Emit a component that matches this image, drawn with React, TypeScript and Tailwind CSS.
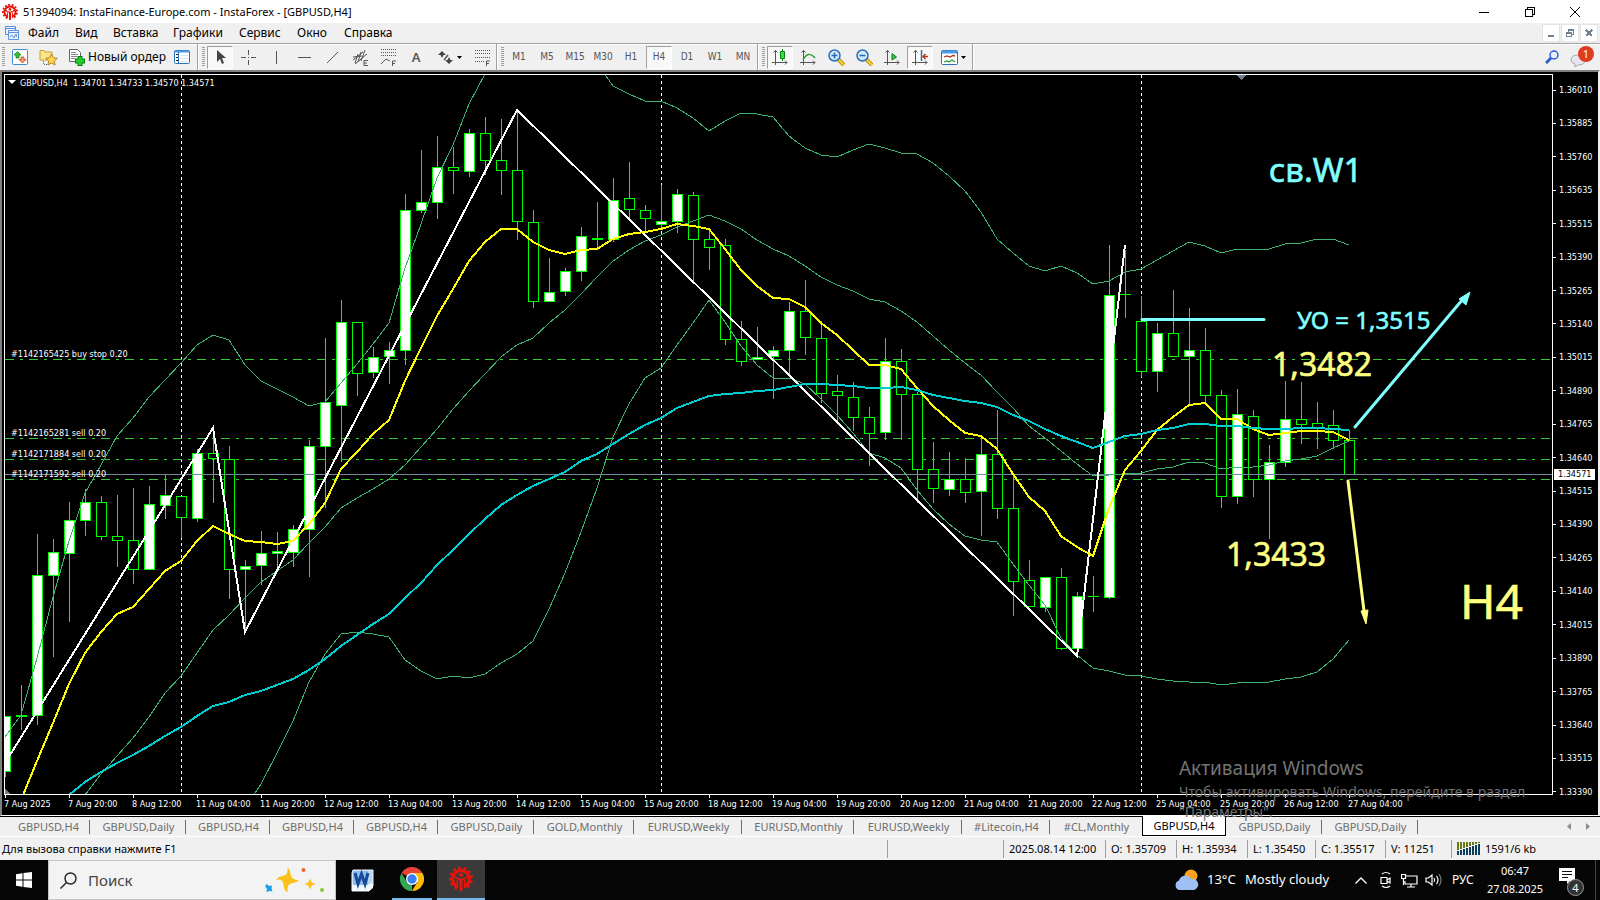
import React from "react";
import clsx from "clsx";

const STEP = 16;
const UNIT = 720 / 1568;

const barX = (i: number) => i * STEP;
const rowY = (v: number) => Math.round(5 + v * UNIT);

// high, body top, body bottom, low, bullish
const CANDLES: number[][] = [
  [1384, 1386, 1504, 1518, 1], [1318, 1382, 1386, 1416, 1], [989, 1079, 1382, 1404, 1], [1000, 1027, 1079, 1257, 1],
  [919, 959, 1029, 1180, 1], [891, 920, 959, 994, 1], [906, 920, 994, 1002, 0], [904, 994, 1001, 1061, 0],
  [889, 1001, 1066, 1098, 0], [884, 924, 1066, 1066, 1], [858, 903, 925, 956, 1], [907, 907, 951, 998, 0],
  [804, 813, 953, 963, 1], [757, 813, 824, 921, 0], [797, 826, 1066, 1130, 0], [1045, 1059, 1066, 1200, 1],
  [982, 1031, 1057, 1099, 1], [984, 1025, 1031, 1060, 1], [969, 977, 1027, 1061, 1], [784, 798, 977, 1082, 1],
  [562, 702, 798, 932, 1], [479, 528, 707, 831, 1], [526, 526, 637, 688, 0], [581, 604, 635, 648, 1],
  [571, 589, 602, 662, 1], [248, 284, 589, 621, 1], [152, 265, 283, 290, 1], [122, 190, 265, 303, 1],
  [145, 190, 195, 248, 0], [107, 116, 199, 211, 1], [81, 116, 175, 207, 0], [85, 175, 197, 250, 0],
  [66, 197, 308, 348, 0], [283, 310, 482, 497, 0], [388, 461, 482, 482, 1], [409, 417, 459, 470, 1],
  [320, 339, 417, 438, 1], [266, 343, 347, 366, 0], [213, 262, 347, 353, 1], [179, 258, 282, 300, 0],
  [272, 284, 300, 330, 0], [229, 308, 313, 326, 1], [237, 249, 308, 333, 1], [244, 251, 347, 437, 0],
  [328, 347, 363, 414, 0], [346, 360, 565, 577, 0], [525, 565, 613, 623, 0], [538, 603, 607, 610, 1],
  [579, 587, 602, 695, 1], [484, 502, 587, 640, 1], [436, 502, 559, 599, 0], [525, 561, 681, 703, 0],
  [642, 678, 687, 745, 0], [658, 691, 733, 765, 0], [712, 733, 768, 841, 0], [562, 613, 766, 783, 1],
  [586, 613, 683, 783, 0], [680, 683, 848, 921, 0], [788, 848, 888, 921, 0], [810, 870, 890, 906, 1],
  [823, 870, 898, 922, 0], [780, 815, 896, 994, 1], [719, 815, 931, 956, 0], [860, 931, 1090, 1167, 0],
  [1045, 1088, 1145, 1145, 0], [1083, 1083, 1147, 1159, 1], [1063, 1083, 1236, 1241, 0], [1115, 1123, 1238, 1255, 1],
  [1080, 1123, 1123, 1159, 0], [359, 469, 1125, 1130, 1], [370, 466, 466, 518, 0], [470, 524, 633, 646, 0],
  [529, 550, 633, 679, 1], [457, 550, 600, 604, 0], [497, 589, 600, 706, 1], [540, 589, 687, 701, 0],
  [675, 687, 907, 932, 0], [673, 728, 905, 923, 1], [719, 731, 870, 908, 0], [795, 831, 870, 1000, 1],
  [656, 739, 831, 843, 1], [658, 739, 750, 793, 0], [701, 748, 757, 804, 0], [719, 752, 785, 803, 0],
  [762, 785, 859, 861, 0],
];

const FAST_MA = [
  1638, 1567, 1483, 1400, 1316, 1247, 1203, 1164, 1147, 1108, 1070, 1048, 1005, 972, 989, 1003, 1007, 1010, 1005, 966,
  921, 848, 810, 772, 740, 656, 583, 514, 455, 394, 353, 324, 324, 352, 371, 379, 371, 367, 346, 336, 330, 325, 314,
  319, 325, 368, 414, 448, 474, 478, 494, 529, 556, 588, 620, 620, 630, 670, 709, 740, 768, 776, 803, 857, 909, 939,
  994, 1018, 1037, 933, 849, 808, 763, 733, 707, 703, 738, 738, 761, 773, 768, 765, 764, 767, 784,
];
const SLOW_MA = [
  1557, 1528, 1508, 1488, 1471, 1450, 1428, 1409, 1386, 1364, 1354, 1340, 1330, 1317, 1304, 1284, 1262, 1232, 1208,
  1184, 1162, 1128, 1095, 1056, 1024, 988, 957, 926, 903, 884, 870, 853, 830, 814, 793, 772, 752, 735, 715, 702, 689,
  683, 681, 678, 675, 668, 662, 662, 665, 667, 670, 671, 668, 676, 685, 692, 700, 704, 713, 730, 743, 759, 776, 789,
  802, 789, 776, 772, 763, 757, 749, 749, 753, 753, 757, 761, 760, 757, 758, 761, 762,
];
const UPPER_LEFT = [
  1430, 1382, 1258, 1125, 1005, 900, 838, 775, 737, 690, 653, 617, 578, 555, 566, 620, 655, 673, 690, 710, 702, 660,
  618, 575, 530, 410, 313, 214, 142, 53, -12,
];
const UPPER_RIGHT = [
  -36, 12, 31, 46, 46, 61, 82, 110, 90, 71, 73, 81, 121, 149, 163, 167, 153, 140, 147, 159, 162, 181, 210, 242, 287,
  347, 376, 406, 415, 404, 421, 444, 438, 419, 412, 391, 373, 353, 362, 377, 369, 369, 367, 358, 354, 346, 346, 360,
];
const MIDDLE = [
  1557, 1512, 1473, 1434, 1387, 1335, 1297, 1248, 1198, 1165, 1127, 1094, 1070, 1045, 1008, 974, 933, 911, 890, 870,
  839, 800, 760, 716, 678, 641, 604, 577, 561, 530, 500, 465, 429, 395, 370, 350, 338, 320, 306, 295, 308, 325, 349,
  368, 384, 404, 428, 447, 460, 476, 484, 502, 527, 558, 589, 617, 643, 679, 714, 753, 780, 809, 837, 863, 861, 857,
  855, 848, 842, 832, 835, 848, 842, 842, 838, 829, 826, 818, 802, 787,
];
const LOWER = [
  1585, 1533, 1465, 1396, 1310, 1249, 1206, 1203, 1206, 1212, 1264, 1287, 1304, 1297, 1302, 1294, 1269, 1249, 1221,
  1152, 1073, 985, 888, 778, 705, 650, 628, 578, 529, 480, 528, 580, 620, 650, 650, 661, 695, 730, 768, 812, 824, 846,
  893, 935, 967, 993, 1001, 1007, 1053, 1100, 1143, 1216, 1253, 1281, 1286, 1296, 1297, 1304, 1309, 1312, 1310, 1317,
  1313, 1312, 1310, 1304, 1300, 1290, 1260, 1220,
];
const ZIGZAG = [[0, 1488], [13, 757], [15, 1202], [32, 65], [67, 1254], [70, 359]];

const ORDERS = [
  { y: 609, label: "#1142165425 buy stop 0.20" },
  { y: 781, label: "#1142165281 sell 0.20" },
  { y: 827, label: "#1142171884 sell 0.20" },
  { y: 872, label: "#1142171592 sell 0.20" },
];

const PRICES = [
  "1.36010", "1.35885", "1.35760", "1.35635", "1.35515", "1.35390", "1.35265", "1.35140", "1.35015", "1.34890",
  "1.34765", "1.34640", "1.34515", "1.34390", "1.34265", "1.34140", "1.34015", "1.33890", "1.33765", "1.33640",
  "1.33515", "1.33390",
];

const TIMES = [
  "7 Aug 2025", "7 Aug 20:00", "8 Aug 12:00", "11 Aug 04:00", "11 Aug 20:00", "12 Aug 12:00", "13 Aug 04:00",
  "13 Aug 20:00", "14 Aug 12:00", "15 Aug 04:00", "15 Aug 20:00", "18 Aug 12:00", "19 Aug 04:00", "19 Aug 20:00",
  "20 Aug 12:00", "21 Aug 04:00", "21 Aug 20:00", "22 Aug 12:00", "25 Aug 04:00", "25 Aug 20:00", "26 Aug 12:00",
  "27 Aug 04:00",
];

const TABS = [
  { name: "GBPUSD,H4", w: "w-[84px]" },
  { name: "GBPUSD,Daily", w: "w-[96px]" },
  { name: "GBPUSD,H4", w: "w-[84px]" },
  { name: "GBPUSD,H4", w: "w-[84px]" },
  { name: "GBPUSD,H4", w: "w-[84px]" },
  { name: "GBPUSD,Daily", w: "w-[96px]" },
  { name: "GOLD,Monthly", w: "w-[100px]" },
  { name: "EURUSD,Weekly", w: "w-[108px]" },
  { name: "EURUSD,Monthly", w: "w-[112px]" },
  { name: "EURUSD,Weekly", w: "w-[108px]" },
  { name: "#Litecoin,H4", w: "w-[88px]" },
  { name: "#CL,Monthly", w: "w-[92px]" },
  { name: "GBPUSD,H4", w: "w-[84px]", active: true },
  { name: "GBPUSD,Daily", w: "w-[96px]" },
  { name: "GBPUSD,Daily", w: "w-[96px]" },
];

function points(values: number[], start = 0) {
  return values.map((v, i) => `${barX(start + i)},${rowY(v)}`).join(" ");
}

function BrandMark({ className }: { className?: string }) {
  return (
    <svg viewBox="0 0 24 24" className={className} fill="none" stroke="#e8140c">
      <path d="M8.500 19.500A8.300 8.300 0 1 1 15.500 19.500" strokeWidth="2.800" />
      <path d="M8 21.300A10.500 10.500 0 1 1 16 21.300" strokeWidth="3" strokeDasharray="2.700 2.500" />
      <path d="M12 12v12" strokeWidth="3" />
      <path d="M4.500 8.500Q7 12 12 12.500Q17 12 19.500 8.500" strokeWidth="2" />
      <path d="M8.300 13v8M15.700 13v8" strokeWidth="1.600" />
      <circle cx="12" cy="8" r="2" fill="#e8140c" stroke="none" />
    </svg>
  );
}

function TitleBar() {
  return (
    <header className="flex h-[23px] items-center bg-white pl-0.5">
      <BrandMark className="h-4 w-4" />
      <h1 className="ml-[5px] text-[11px] leading-4 text-black">
        51394094: InstaFinance-Europe.com - InstaForex - [GBPUSD,H4]
      </h1>
      <div className="ml-auto flex text-black">
        <button aria-label="Minimize" className="flex h-[22px] w-[46px] items-center justify-center">
          <svg width="10" height="10" stroke="currentColor" shapeRendering="crispEdges"><path d="M0 5.500h10" /></svg>
        </button>
        <button aria-label="Restore" className="flex h-[22px] w-[45px] items-center justify-center">
          <svg width="10" height="10" fill="none" stroke="currentColor" shapeRendering="crispEdges">
            <path d="M.5 2.500h7v7h-7zM2.500 2V.5h7v7H8" />
          </svg>
        </button>
        <button aria-label="Close" className="mr-[2px] flex h-[22px] w-[46px] items-center justify-center">
          <svg width="10" height="10" stroke="currentColor"><path d="M0 0l10 10M10 0L0 10" /></svg>
        </button>
      </div>
    </header>
  );
}

function MdiButton({ label, children }: { label: string; children: React.ReactNode }) {
  return (
    <button aria-label={label} className="flex h-[18px] w-[18px] items-center justify-center border border-[#e3e3e3] bg-white">
      <svg width="10" height="10" fill="none" stroke="#708090" shapeRendering="crispEdges">{children}</svg>
    </button>
  );
}

function MenuBar() {
  const items = [
    ["Файл", "w-[47px]"], ["Вид", "w-[38px]"], ["Вставка", "w-[60px]"], ["Графики", "w-[66px]"],
    ["Сервис", "w-[58px]"], ["Окно", "w-[47px]"], ["Справка", "w-[60px]"],
  ];
  return (
    <nav className="flex h-[20px] items-center bg-[#f0f0f0] pl-[5px]">
      <svg width="15" height="15" viewBox="0 0 15 15" fill="#e8f1fc" stroke="#5b93dc" className="mr-2">
        <path d="M.5.5h10v8H.5z" /><path d="M.5 2.500h10" /><path d="M3.500 4.500h10v9h-10z" /><path d="M3.500 6.500h10" />
        <path d="M5 11l2-2 2 3 2-4 1 3" fill="none" />
      </svg>
      {items.map(([name, w]) => (
        <button key={name} className={clsx("text-left text-[12px] leading-4 text-black", w)}>{name}</button>
      ))}
      <div className="ml-auto flex gap-px pr-[2px]">
        <MdiButton label="Minimize chart"><path d="M2 8h6" strokeWidth="2" /></MdiButton>
        <MdiButton label="Restore chart"><path d="M1.500 4.500h5v4h-5zM3.500 4V1.500h5v5H7M1 5h6M3 2h6" /></MdiButton>
        <MdiButton label="Close chart"><path d="M2 2l6 6M8 2L2 8" strokeWidth="2" /></MdiButton>
      </div>
    </nav>
  );
}

function Grip() {
  return (
    <svg width="3" height="20" className="mr-px ml-[3px] shrink-0" shapeRendering="crispEdges">
      <path d="M1.500 0v20" stroke="#a0a0a0" strokeWidth="3" strokeDasharray="1 1" />
    </svg>
  );
}

function Sep() {
  return <div className="h-[26px] w-[2px] shrink-0 border-l border-[#a0a0a0] bg-white" />;
}

function Tool({ label, pressed, wide, children }: { label: string; pressed?: boolean; wide?: boolean; children: React.ReactNode }) {
  return (
    <button
      aria-label={label}
      className={clsx(
        "mx-px flex h-[23px] shrink-0 items-center justify-center gap-[3px] border text-[#555]",
        wide ? "w-[36px]" : "w-[26px]",
        pressed ? "border-t-[#a0a0a0] border-r-white border-b-white border-l-[#a0a0a0] bg-[#f8f8f8]" : "border-transparent",
      )}
    >
      {children}
    </button>
  );
}

function Glyph({ children }: { children: React.ReactNode }) {
  return (
    <svg width="17" height="17" viewBox="0 0 17 17" fill="none" stroke="#555" className="shrink-0">
      {children}
    </svg>
  );
}

function Caret() {
  return <svg width="5" height="3" fill="#000" className="shrink-0"><path d="M0 0h5L2.500 3z" /></svg>;
}

function Axes() {
  return <path d="M3.500 1v15M0 13.500h15M1.500 3.500l2-2 2 2M13 11.500l2 2-2 2" />;
}

function Magnifier({ plus }: { plus?: boolean }) {
  return (
    <Glyph>
      <path d="M10 10l6 6" stroke="#b58a10" strokeWidth="4" />
      <path d="M10 10l6 6" stroke="#f5d73a" strokeWidth="2" />
      <circle cx="6.500" cy="6.500" r="5.500" fill="#cfe9fb" stroke="#2b6fb8" strokeWidth="1.500" />
      <path d={plus ? "M3.500 6.500h6M6.500 3.500v6" : "M3.500 6.500h6"} stroke="#2b6fb8" strokeWidth="1.600" />
    </Glyph>
  );
}

function Toolbar() {
  const frames = ["M1", "M5", "M15", "M30", "H1", "H4", "D1", "W1", "MN"];
  return (
    <div className="flex h-[27px] items-center border-t border-[#a0a0a0] bg-[#f0f0f0] pr-1 shadow-[inset_0_1px_0_#fff]">
      <div className="flex h-6 w-[197px] shrink-0 items-center pl-[2px]">
        <svg width="3" height="20" shapeRendering="crispEdges">
          <path d="M1.500 0v20" stroke="#a0a0a0" strokeWidth="3" strokeDasharray="1 1" />
        </svg>
        <button aria-label="New chart" className="ml-[7px]">
          <Glyph>
            <rect x=".5" y=".5" width="15" height="15" rx="1" fill="#fff" stroke="#3d8bd0" />
            <path d="M5.500 2.500L9 6H7v3H4V6H2z" fill="#3fbf3f" stroke="#16861a" strokeWidth=".8" />
            <path d="M10.500 14L14 10.500h-2V8H9v2.500H7z" fill="#f59a6a" stroke="#c9481b" strokeWidth=".8" />
          </Glyph>
        </button>
        <button aria-label="Profiles" className="ml-[10px]">
          <svg width="19" height="17" viewBox="0 0 19 17">
            <path d="M1 1.500h4l1 1.500h7v8H1z" fill="#fbe48c" stroke="#c8a12c" />
            <path d="M4.500 12v3.500h4" stroke="#666" fill="none" strokeDasharray="1 1" />
            <path d="M12.500 5l1.800 3.700 4 .5-3 2.800.8 4-3.600-2-3.600 2 .8-4-3-2.800 4-.5z" fill="#ffd34d" stroke="#a67c1c" strokeWidth=".9" />
          </svg>
        </button>
        <button className="ml-[11px] flex items-center gap-[2px]">
          <Glyph>
            <path d="M.5.5h8l3 3v9H.5z" fill="#fff" stroke="#666" />
            <path d="M2 3.500h5M2 5.500h7M2 7.500h6M2 9.500h4" stroke="#888" />
            <path d="M11 7v10M6 12h10" stroke="#0b7d12" strokeWidth="5" />
            <path d="M11 8v8M7 12h8" stroke="#25d02f" strokeWidth="3" />
          </Glyph>
          <span className="text-[12px] leading-4 whitespace-nowrap text-black">Новый ордер</span>
        </button>
        <button aria-label="Data window" className="ml-auto mr-[6px]">
          <Glyph>
            <rect x=".5" y="1.500" width="15" height="13" rx="1" fill="#fff" stroke="#2b6fb8" />
            <path d="M1 2.500h14" stroke="#4d9be6" strokeWidth="2" />
            <path d="M4.500 3v11" stroke="#2b6fb8" />
            <path d="M2 5.500h2M2 8.500h2M2 11.500h2" stroke="#222" />
            <path d="M6 6.500h8M6 9.500h8M6 12.500h8" stroke="#d5e6f7" />
          </Glyph>
        </button>
      </div>
      <Sep />
      <Grip />
      <Tool label="Cursor" pressed>
        <Glyph><path d="M5 1v12l3-3 2 5 2-1-2-5h4z" fill="#444" stroke="none" /></Glyph>
      </Tool>
      <Tool label="Crosshair"><Glyph><path d="M8.500 1v5M8.500 11v5M1 8.500h5M11 8.500h5M8 8.500h1" /></Glyph></Tool>
      <Tool label="Vertical line"><Glyph><path d="M8.500 2v13" /></Glyph></Tool>
      <Tool label="Horizontal line"><Glyph><path d="M2 8.500h13" /></Glyph></Tool>
      <Tool label="Trendline"><Glyph><path d="M3 14L14 3" /></Glyph></Tool>
      <Tool label="Equidistant channel">
        <Glyph>
          <path d="M1 11L11 3M3 15L15 5M3 14L6 5M6 13L9 3M9 12l4-11M1 8l9-1" />
          <path d="M16 11.500h-4v5h4M12 14h3" />
        </Glyph>
      </Tool>
      <Tool label="Fibonacci retracement">
        <Glyph>
          <path d="M1 .5h15M1 3.500h15M1 6.500h15" strokeDasharray="1 1" />
          <path d="M1 15l5-5 4 2M12.500 17v-5H16M12 14.500h3" />
        </Glyph>
      </Tool>
      <Tool label="Text"><span className="text-[13px] leading-4 font-semibold">A</span></Tool>
      <Tool label="Arrows" wide>
        <Glyph>
          <path d="M5 2l4 4-2.500 0L5 9 3.500 6H1zM12 15l-4-4h2.500L12 8l1.500 3H16z" fill="#444" stroke="none" />
          <path d="M7 11l4-5" strokeWidth="1.500" />
        </Glyph>
        <Caret />
      </Tool>
      <Tool label="Fibonacci fan">
        <Glyph>
          <path d="M1 1.500h15M1 4.500h15M1 8.500h15M1 12.500h10" strokeDasharray="1 1" />
          <path d="M12.500 17v-5H16M12 14.500h3" />
        </Glyph>
      </Tool>
      <Sep />
      <Grip />
      {frames.map((f) => (
        <Tool key={f} label={f} pressed={f === "H4"}>
          <span className="font-['DejaVu_Sans_Condensed','Noto_Sans',sans-serif] text-[10px] leading-3">{f}</span>
        </Tool>
      ))}
      <Sep />
      <Grip />
      <Tool label="Candlesticks" pressed>
        <Glyph><Axes /><path d="M10.500 0v12" stroke="#0b7d12" /><path d="M8.500 2.500h4v7h-4z" fill="#2ee63a" stroke="#0b7d12" /></Glyph>
      </Tool>
      <Tool label="Line chart"><Glyph><Axes /><path d="M3 11q5-10 12-2" stroke="#2c9a34" strokeWidth="1.300" /></Glyph></Tool>
      <Tool label="Zoom in"><Magnifier plus /></Tool>
      <Tool label="Zoom out"><Magnifier /></Tool>
      <Tool label="Auto scroll"><Glyph><Axes /><path d="M8 4.500l4.500 3.500L8 11z" fill="#2ecc40" stroke="#0b7d12" /></Glyph></Tool>
      <Tool label="Chart shift" pressed>
        <Glyph><Axes /><path d="M9.500 1v11" stroke="#2b6fb8" strokeWidth="1.500" /><path d="M16 7.500h-5M13.500 5L11 7.500l2.500 2.500" stroke="#b5391b" strokeWidth="1.500" /></Glyph>
      </Tool>
      <Tool label="Templates" wide>
        <Glyph>
          <rect x=".5" y="1.500" width="16" height="14" rx="1" fill="#fff" stroke="#2b6fb8" />
          <path d="M1 3h15" stroke="#4d9be6" strokeWidth="3" />
          <path d="M3 8l3-1 3 1 3-1.500 2 .5" stroke="#a3341c" strokeWidth="1.300" />
          <path d="M3 13l3-1 2 1 3-2 3 2" stroke="#2c9a34" strokeWidth="1.300" />
        </Glyph>
        <Caret />
      </Tool>
      <Sep />
      <div className="ml-auto flex items-center gap-[11px]">
        <button aria-label="Search">
          <svg width="14" height="14" fill="none" stroke="#2a5fd0">
            <path d="M1 13l5-5" strokeWidth="3" /><circle cx="9" cy="5" r="4" fill="#e8f0ff" strokeWidth="1.500" />
          </svg>
        </button>
        <button aria-label="Messages, 1 new" className="relative mr-[2px] h-[22px] w-[24px]">
          <svg width="16" height="14" className="absolute bottom-0 left-0">
            <path d="M1 6q0-5 7-5t7 5-7 5l-3 2V10Q1 9 1 6z" fill="#e6e6ec" stroke="#a9a9b2" />
          </svg>
          <span className="absolute top-0 right-0 h-4 w-4 rounded-full bg-[#e23a1e] text-center text-[11px] leading-4 text-white">1</span>
        </button>
      </div>
    </div>
  );
}

function Candle({ i, bar }: { i: number; bar: number[] }) {
  const [high, top, bottom, low] = bar.slice(0, 4).map(rowY);
  const x = barX(i);
  return (
    <g stroke="#00ff00">
      <path d={`M${x + 0.5} ${high}V${top}M${x + 0.5} ${bottom}V${low}`} />
      {top === bottom ? (
        <path d={`M${x - 5} ${top + 0.5}h11`} />
      ) : (
        <rect x={x - 4.5} y={top + 0.5} width="10" height={bottom - top} fill={bar[4] ? "#fff" : "#000"} />
      )}
    </g>
  );
}

function Plot() {
  return (
    <svg className="block h-[719px] w-full" fill="none" role="img" aria-label="GBPUSD H4 candlestick chart">
      <g shapeRendering="crispEdges">
        {[11, 41, 71].map((i) => (
          <line key={i} x1={barX(i) + 0.5} x2={barX(i) + 0.5} y1="0" y2="719" stroke="#fff" strokeDasharray="3 3" />
        ))}
        {ORDERS.map((o) => (
          <line key={o.y} x1="0" x2="100%" y1={rowY(o.y) - 0.5} y2={rowY(o.y) - 0.5} stroke="#32cd32" strokeDasharray="9 6 3 6" />
        ))}
        {CANDLES.map((bar, i) => <Candle key={i} i={i} bar={bar} />)}
        <line x1="0" x2="100%" y1={rowY(859) + 0.5} y2={rowY(859) + 0.5} stroke="#778899" />
        <g stroke="#3cb371">
          <polyline points={points(UPPER_LEFT)} />
          <polyline points={points(UPPER_RIGHT, 37)} />
          <polyline points={points(MIDDLE, 5)} />
          <polyline points={points(LOWER, 15)} />
        </g>
        <polyline points={ZIGZAG.map(([i, v]) => `${barX(i)},${rowY(v)}`).join(" ")} stroke="#fff" strokeWidth="2" />
        <polyline points={points(FAST_MA)} stroke="#ffff00" strokeWidth="2" />
        <polyline points={points(SLOW_MA, 4)} stroke="#00ced1" strokeWidth="2" />
        <path d="M1232 0h9l-4.500 5zM0 714v5h5z" fill="#708090" />
      </g>

      <g fill="#fff" className="text-[9px]">
        <path d="M3 5h8l-4 4z" />
        <text x="15" y="11" xmlSpace="preserve">{"GBPUSD,H4  1.34701 1.34733 1.34570 1.34571"}</text>
        {ORDERS.map((o) => <text key={o.y} x="6" y={rowY(o.y) - 3}>{o.label}</text>)}
      </g>

      <g fill="#80ffff" stroke="#80ffff" className="font-['Noto_Sans','Open_Sans',sans-serif]">
        <path d="M1137 244.500h122" strokeWidth="3" strokeLinecap="round" />
        <path d="M1350 352L1458 224" strokeWidth="3" strokeLinecap="round" />
        <path d="M1465 217l-4 13-7-6z" />
        <g strokeWidth="0.600">
          <text x="1264" y="107" className="text-[33px]">св.W1</text>
          <text x="1292" y="254" className="text-[24px]">УО = 1,3515</text>
        </g>
      </g>
      <g fill="#ffff80" stroke="#ffff80" className="font-['Noto_Sans','Open_Sans',sans-serif]">
        <path d="M1343 406l16 130" strokeWidth="3" strokeLinecap="round" />
        <path d="M1361 549l-5-13 7-1z" />
        <g strokeWidth="0.600">
          <text x="1267" y="301" className="text-[32px]">1,3482</text>
          <text x="1221" y="491" className="text-[32px]">1,3433</text>
          <text x="1455" y="544" className="text-[48px]">H4</text>
        </g>
      </g>
    </svg>
  );
}

function Chart() {
  return (
    <main className="relative border-t-2 border-r-2 border-b border-l-2 border-t-[#808080] border-r-[#f0f0f0] border-b-white border-l-[#808080] bg-black pt-[2px] pl-[2px] font-['DejaVu_Sans_Condensed','Noto_Sans',sans-serif] text-[9px] leading-3 text-white">
      <div className="flex">
        <div className="min-w-0 flex-1 border border-white">
          <Plot />
        </div>
        <div className="relative -mb-[3px] flex w-[45px] flex-col justify-between pt-[10px]">
          {PRICES.map((p) => (
            <div key={p} className="flex items-center">
              <span className="mr-[3px] h-px w-[3px] bg-white" />
              {p}
            </div>
          ))}
          <span className="absolute top-[395px] left-px w-[41px] bg-white pl-[4px] leading-[11px] text-black">1.34571</span>
        </div>
      </div>
      <div className="flex h-[20px] overflow-hidden">
        {TIMES.map((t) => (
          <div key={t} className="w-16 shrink-0 pl-px whitespace-nowrap">
            <div className="h-[3px] w-px bg-white" />
            <span className="-ml-px">{t}</span>
          </div>
        ))}
      </div>
      <div className="pointer-events-none absolute top-[682px] left-[1177px] w-[370px] font-['Noto_Sans','Open_Sans',sans-serif] text-[#747474]">
        <p className="text-[19px] leading-7">Активация Windows</p>
        <p className="text-[14px] leading-5">Чтобы активировать Windows, перейдите в раздел "Параметры".</p>
      </div>
    </main>
  );
}

function Tabs() {
  return (
    <div className="flex h-[21px] items-start border-t border-b border-t-black border-b-white bg-[#f0f0f0] pl-[6px] text-[11px] text-[#6d6d6d]">
      {TABS.map((t, i) =>
        t.active ? (
          <button key={i} className={clsx("-mt-px h-[20px] shrink-0 border border-t-0 border-black bg-white leading-[20px] whitespace-nowrap text-black", t.w)}>
            {t.name}
          </button>
        ) : (
          <button key={i} className={clsx("flex h-[19px] shrink-0 items-center justify-center pl-[2px] whitespace-nowrap", t.w)}>
            <span className="flex-1 leading-4">{t.name}</span>
            <span className={clsx("h-[14px] w-px", i === 11 ? "bg-transparent" : "bg-[#6d6d6d]")} />
          </button>
        ),
      )}
      <div className="ml-auto flex gap-[15px] pt-[6px] pr-[10px]">
        <svg width="4" height="7" fill="#8a8a8a"><path d="M4 0v7L0 3.500z" /></svg>
        <svg width="4" height="7" fill="#8a8a8a"><path d="M0 0v7l4-3.500z" /></svg>
      </div>
    </div>
  );
}

function StatusBar() {
  const cells = [
    ["", "w-[116px]"], ["2025.08.14 12:00", "w-[102px]"], ["O: 1.35709", "w-[71px]"], ["H: 1.35934", "w-[71px]"],
    ["L: 1.35450", "w-[68px]"], ["C: 1.35517", "w-[70px]"], ["V: 11251", "w-[66px]"],
  ];
  return (
    <footer className="flex h-[23px] items-center bg-[#f0f0f0] text-[11px] leading-4 whitespace-nowrap text-black">
      <span className="flex-1 pl-0.5">Для вызова справки нажмите F1</span>
      {cells.map(([text, w]) => (
        <span key={text} className={clsx("h-[18px] border-l border-[#a0a0a0] pl-[5px] leading-[18px]", w)}>{text}</span>
      ))}
      <span className="flex h-[18px] w-[149px] items-center gap-1 border-l border-[#a0a0a0] pl-[5px]">
        <svg width="24" height="13" shapeRendering="crispEdges">
          {[0, 1, 2, 3, 4, 5, 6, 7].map((n) => (
            <g key={n}>
              <rect x={n * 3} y="0" width="2" height={8 - n} fill="#6b7a10" />
              <rect x={n * 3} y={9 - n} width="2" height={4 + n} fill="#0b3f5e" />
            </g>
          ))}
        </svg>
        1591/6 kb
      </span>
    </footer>
  );
}

function Taskbar() {
  return (
    <div className="flex h-[40px] items-stretch bg-[#060606] text-white">
      <button aria-label="Start" className="flex w-12 items-center justify-center">
        <svg width="16" height="16" fill="#fff"><path d="M0 2.200L6.500 1.300v6.200H0zM7.500 1.100L16 0v7.500H7.500zM0 8.500h6.500v6.200L0 13.800zM7.500 8.500H16V16l-8.500-1.100z" /></svg>
      </button>
      <label className="flex w-[288px] items-center border border-[#c4c4c4] bg-[#f3f3f3] pl-[11px]">
        <svg width="17" height="17" fill="none" stroke="#222" strokeWidth="1.400">
          <circle cx="10.500" cy="6.500" r="5.500" /><path d="M6.500 10.500L.5 16.500" />
        </svg>
        <input aria-label="Поиск" placeholder="Поиск" className="ml-[11px] w-[175px] bg-transparent text-[15px] text-[#333] outline-none placeholder:text-[#444]" />
        <svg width="62" height="28" viewBox="0 0 62 28">
          <path d="M24.500 2q2 0 3 6t8 6q0 2-6 3t-5 9q-3 0-4-7t-7-5q0-3 6-4t5-8z" fill="#fcc21b" />
          <path d="M47 12.500l1.800 4 4 1.500-4 1.500-1.800 4-1.800-4-4-1.500 4-1.500z" fill="#fdc01e" />
          <path d="M4 18l2 2 3-.5-.5 3 1 3-3-.5-3 1 .5-3-2-3z" fill="#1a9fe8" />
          <circle cx="40.500" cy="4" r="2" fill="#f2652a" /><circle cx="59" cy="24" r="2" fill="#8bc63f" />
        </svg>
      </label>
      <button aria-label="Word" className="ml-[2px] flex w-[48px] items-center justify-center">
        <svg width="23" height="23" viewBox="0 0 23 23">
          <path d="M2 1h20v16l-4 5H1V4z" fill="#b9d6f2" stroke="#e9f2fc" />
          <path d="M1 15q10 3 21-1v5l-4 3H1z" fill="#f2f7fd" />
          <path d="M2 2h15v14H2z" fill="#8fbbe8" />
          <path d="M4 4l3 11 3.500-10L14 15l3-11" fill="none" stroke="#174a9c" strokeWidth="3" />
        </svg>
      </button>
      <button aria-label="Chrome" className="mx-[6px] flex w-[40px] items-center justify-center border-b-2 border-[#76b9ed]">
        <svg width="24" height="24" viewBox="0 0 24 24">
          <path d="M12 12L1.600 6A12 12 0 0 1 22.400 6z" fill="#ea4335" />
          <path d="M12 12V24A12 12 0 0 1 1.600 6L6.800 15z" fill="#34a853" />
          <path d="M12 6h10.400A12 12 0 0 1 12 24l5.200-9z" fill="#fbbc05" />
          <circle cx="12" cy="12" r="6" fill="#fff" /><circle cx="12" cy="12" r="4.700" fill="#3a80f0" />
        </svg>
      </button>
      <button aria-label="InstaForex" className="-ml-px flex w-[48px] items-center justify-center border-b-2 border-[#76b9ed] bg-[#3a3a3a]">
        <BrandMark className="h-6 w-6" />
      </button>

      <div className="ml-auto flex items-center">
        <button className="flex items-center text-[13px] whitespace-nowrap">
          <svg width="25" height="22" viewBox="0 0 25 22" className="mr-2">
            <circle cx="17" cy="7" r="6.500" fill="#f9a01f" />
            <path d="M5 21a5 5 0 0 1 0-9.500 6.500 6.500 0 0 1 12-1.500 5.500 5.500 0 0 1 3 11z" fill="#9dbff5" />
          </svg>
          <span className="w-[38px] text-left">13°C</span>
          <span className="w-[106px] text-left">Mostly cloudy</span>
        </button>
        <button aria-label="Hidden icons" className="flex w-[20px] justify-center">
          <svg width="12" height="7" fill="none" stroke="#fff" strokeWidth="1.300"><path d="M.5 6.500l5.500-5.500 5.500 5.500" /></svg>
        </button>
        <svg width="14" height="18" fill="none" stroke="#fff" strokeWidth="1.200" className="ml-2">
          <path d="M2 6.500h6v6H2zM8 9l3-2v5l-3-2M3 3q4-3 8 0M3 15q4 3 8 0" />
        </svg>
        <svg width="17" height="15" fill="none" stroke="#fff" strokeWidth="1.200" className="ml-[8px]">
          <path d="M5 3h11v8H4V8M10 11v3M6 14h8M.5 1.500h4v4h-4zM2.500 6v6" />
        </svg>
        <svg width="17" height="14" fill="none" stroke="#fff" strokeWidth="1.200" className="ml-[7px]">
          <path d="M1 5h2.500L7 2v10L3.500 9H1zM9 5q1.500 2 0 4M11.500 3q3 4 0 8" /><path d="M14 1q4 6 0 12" stroke="#777" />
        </svg>
        <span className="ml-[10px] w-[27px] text-[12px]">РУС</span>
        <time className="w-[72px] text-center text-[11px] leading-[18px]">06:47<br />27.08.2025</time>
        <button aria-label="Notifications, 4" className="relative h-7 w-[36px]">
          <svg width="17" height="17" className="absolute top-0.5 left-[8px]">
            <path d="M0 0h16v13h-5l-3 3v-3H0z" fill="#fff" /><path d="M3 3.500h10M3 6.500h10M3 9.500h6" stroke="#111" />
          </svg>
          <span className="absolute right-[3px] bottom-[-2px] h-[17px] w-[17px] rounded-full border border-[#999] bg-[#333] text-center text-[11px] leading-[15px]">4</span>
        </button>
        <div className="mr-1 ml-[8px] h-10 w-px bg-[#444]" />
      </div>
    </div>
  );
}

export default function App() {
  return (
    <div className="flex min-h-screen w-full flex-col overflow-hidden bg-black font-['Noto_Sans','Open_Sans',sans-serif]">
      <TitleBar />
      <MenuBar />
      <Toolbar />
      <Chart />
      <Tabs />
      <StatusBar />
      <Taskbar />
    </div>
  );
}
